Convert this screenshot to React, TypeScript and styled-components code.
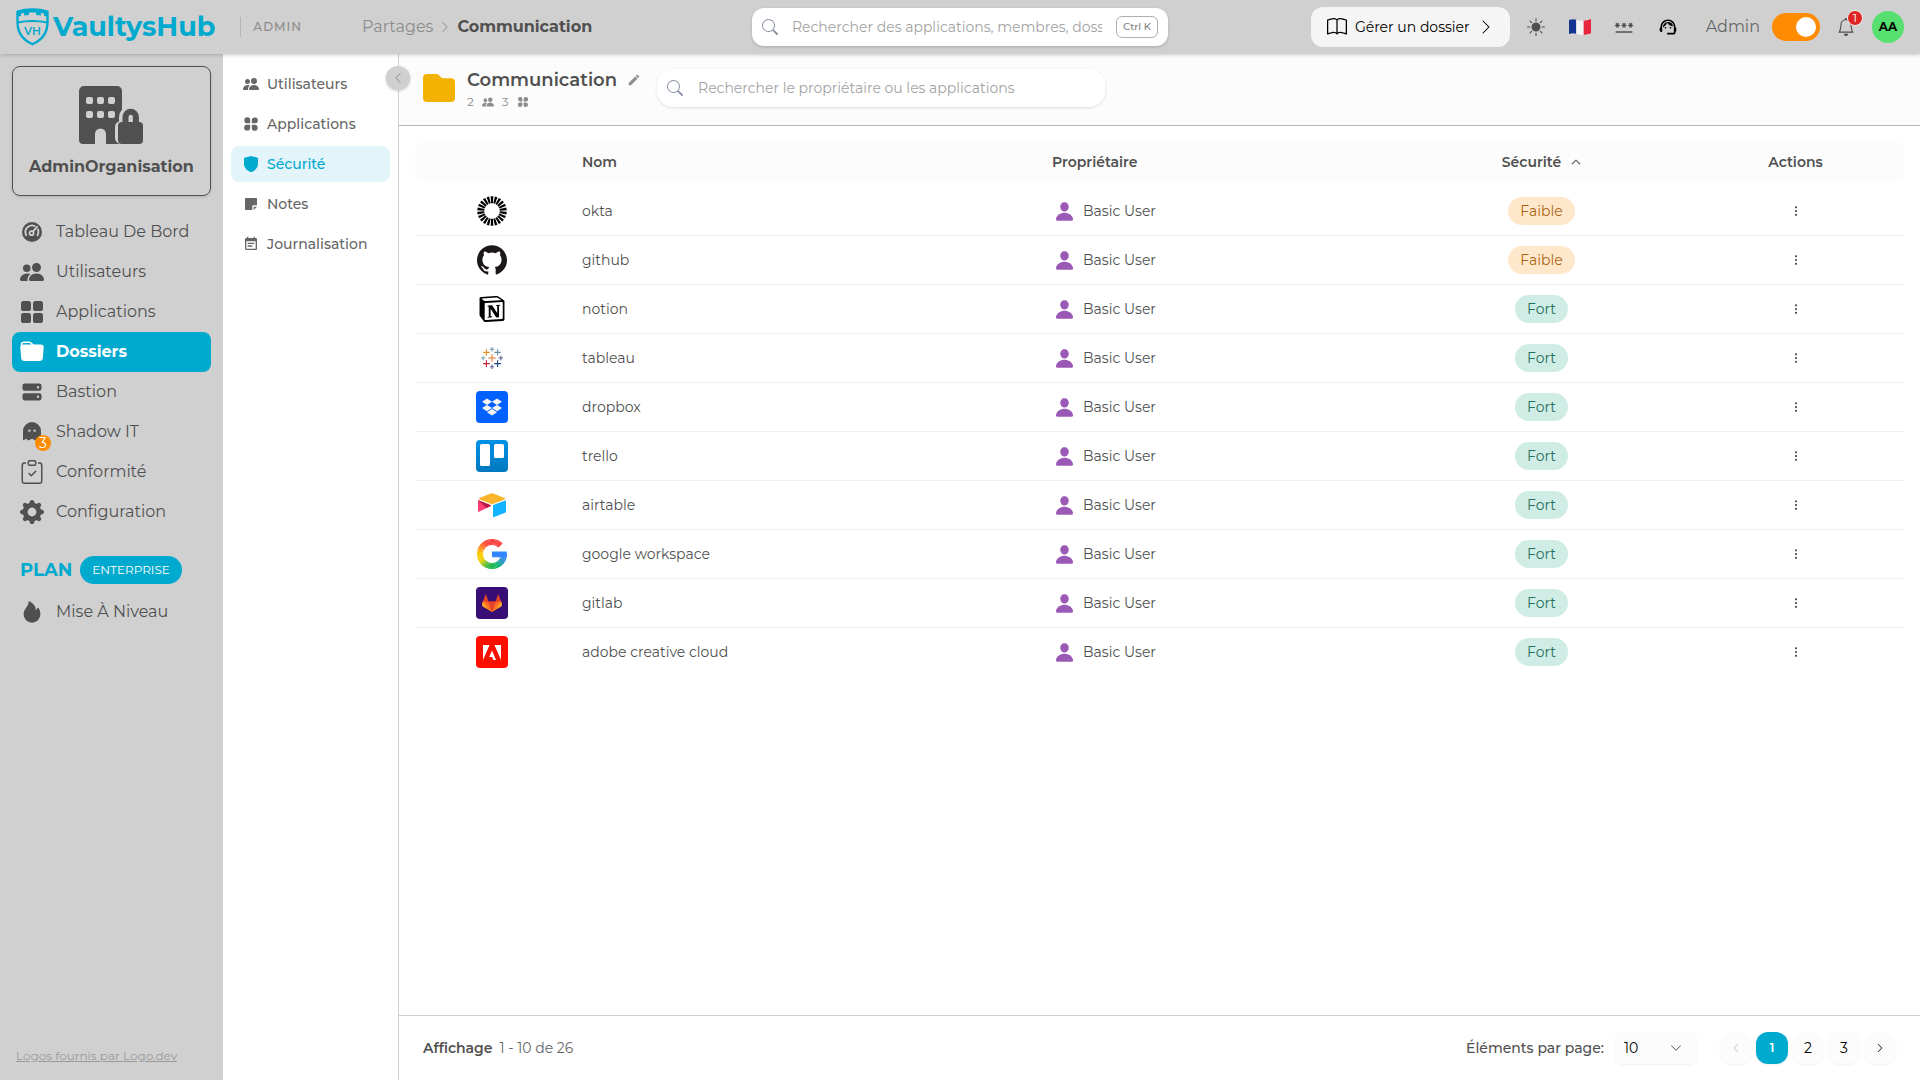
import React, { useState } from 'react';
import styled, { createGlobalStyle, css } from 'styled-components';
import {
  BsBell,
  BsBook,
  BsChevronDown,
  BsChevronLeft,
  BsChevronRight,
  BsChevronUp,
  BsClipboardCheck,
  BsFillSunFill,
  BsFolderFill,
  BsGearFill,
  BsPeopleFill,
  BsSearch,
  BsThreeDotsVertical,
} from 'react-icons/bs';
import { HiServer } from 'react-icons/hi';
import { IoPerson } from 'react-icons/io5';
import { MdEventNote, MdModeEdit, MdPassword, MdSupportAgent } from 'react-icons/md';
import { RiStickyNoteFill } from 'react-icons/ri';
import { SiDropbox, SiGithub, SiNotion } from 'react-icons/si';

const color = {
  chrome: '#d0d0d0',
  brand: '#00a9ce',
  text: '#505050',
  muted: '#666666',
  faint: '#8c8c8c',
  surface: '#fcfcfc',
  orange: '#ff8c00',
};

const GlobalStyle = createGlobalStyle`
  *, *::before, *::after { box-sizing: border-box; }
  body {
    margin: 0;
    background: #fff;
    color: ${color.text};
    font-family: Montserrat, "Liberation Sans", sans-serif;
    font-size: 14px;
    line-height: 20px;
  }
  button, input, select { font: inherit; color: inherit; }
  button { border: 0; padding: 0; background: none; cursor: pointer; }
  svg { display: block; flex: none; }
`;

/* ---------- layout ---------- */

const Page = styled.div`
  display: flex;
  flex-direction: column;
  min-height: 100vh;
`;

const Header = styled.header`
  position: relative;
  z-index: 2;
  display: grid;
  grid-template-columns: 1fr minmax(240px, 416px) 1fr;
  align-items: center;
  height: 54px;
  padding: 0 16px;
  background: ${color.chrome};
  box-shadow: 0 1px 4px rgba(0, 0, 0, 0.2);
`;

const Body = styled.div`
  display: flex;
  flex: 1;
`;

const Sidebar = styled.aside`
  display: flex;
  flex-direction: column;
  flex: none;
  width: 223px;
  padding: 12px;
  background: ${color.chrome};
`;

const SubNav = styled.nav`
  position: relative;
  display: flex;
  flex-direction: column;
  gap: 4px;
  flex: none;
  width: 176px;
  padding: 12px 8px;
  border-right: 1px solid ${color.chrome};
`;

const Main = styled.main`
  display: flex;
  flex-direction: column;
  flex: 1;
  min-width: 0;
`;

/* ---------- header ---------- */

const HeaderStart = styled.div`
  display: flex;
  align-items: center;
`;

const Brand = styled.a`
  display: flex;
  align-items: center;
  gap: 4px;
  color: ${color.brand};
  font-size: 27px;
  font-weight: 700;
  line-height: 36px;
  text-decoration: none;
`;

const Space = styled.span`
  margin-left: 25px;
  padding-left: 12px;
  border-left: 1px solid #b4b4b4;
  color: ${color.faint};
  font-size: 12px;
  font-weight: 500;
  letter-spacing: 1px;
`;

const Breadcrumb = styled.nav`
  display: flex;
  align-items: center;
  gap: 6px;
  margin-left: 60px;
  color: ${color.faint};
  font-size: 16px;
`;

const CrumbLink = styled.a`
  color: inherit;
  text-decoration: none;
`;

const Crumb = styled.span`
  color: ${color.text};
  font-weight: 700;
`;

const SearchBox = styled.label<{ $wide?: boolean }>`
  display: flex;
  align-items: center;
  gap: ${(p) => (p.$wide ? '15px' : '14px')};
  width: ${(p) => (p.$wide ? '448px' : '100%')};
  height: 38px;
  padding: 0 10px;
  border-radius: ${(p) => (p.$wide ? '16px' : '12px')};
  background: #fff;
  box-shadow: 0 1px 3px rgba(0, 0, 0, ${(p) => (p.$wide ? 0.12 : 0.2)});
  color: #8d96a8;
`;

const SearchInput = styled.input`
  flex: 1;
  min-width: 0;
  padding: 0;
  border: 0;
  outline: 0;
  background: none;
  color: ${color.text};
  font-size: 14px;
  &::placeholder { color: #a3a3a3; opacity: 1; }
`;

const Kbd = styled.kbd`
  padding: 0 6px;
  border: 1px solid #b0b0b0;
  border-radius: 6px;
  color: #808080;
  font-family: inherit;
  font-size: 10px;
  font-weight: 500;
`;

const HeaderEnd = styled.div`
  display: flex;
  align-items: center;
  justify-content: flex-end;
  gap: 8px;
`;

const GuideButton = styled.button`
  display: flex;
  align-items: center;
  gap: 8px;
  height: 40px;
  padding: 0 16px;
  border-radius: 12px;
  background: #f5f5f5;
  color: #000;
`;

const IconButton = styled.button<{ $dark?: boolean }>`
  position: relative;
  display: grid;
  place-items: center;
  width: 36px;
  height: 36px;
  color: ${(p) => (p.$dark ? '#000' : color.text)};
`;

const ToggleLabel = styled.label`
  display: flex;
  align-items: center;
  gap: 12px;
  margin-left: 12px;
  color: ${color.muted};
  font-size: 16px;
`;

const Toggle = styled.input`
  appearance: none;
  display: flex;
  align-items: center;
  width: 48px;
  height: 28px;
  margin: 0;
  padding: 4px;
  border-radius: 14px;
  background: #aaa;
  cursor: pointer;
  &::before {
    content: '';
    width: 20px;
    height: 20px;
    border-radius: 50%;
    background: #fff;
  }
  &:checked { justify-content: flex-end; background: ${color.orange}; }
`;

const BellBadge = styled.span`
  position: absolute;
  top: 1px;
  right: 1px;
  width: 16px;
  height: 16px;
  border: 1px solid #f4eeee;
  border-radius: 50%;
  background: #e02424;
  color: #fff;
  font-size: 12px;
  line-height: 14px;
  text-align: center;
`;

const Avatar = styled.button`
  width: 32px;
  height: 32px;
  border-radius: 50%;
  background: #55e070;
  color: #000;
  font-size: 12px;
  font-weight: 700;
`;

/* ---------- sidebar ---------- */

const OrgCard = styled.button`
  display: flex;
  flex-direction: column;
  align-items: center;
  gap: 13px;
  height: 130px;
  padding-top: 19px;
  border: 1px solid ${color.text};
  border-radius: 8px;
  box-shadow: 0 1px 3px rgba(0, 0, 0, 0.15);
  color: ${color.text};
  font-size: 16px;
  font-weight: 700;
`;

const SideList = styled.nav`
  display: flex;
  flex-direction: column;
  margin-top: 16px;
`;

const SideLink = styled.a<{ $active?: boolean }>`
  display: flex;
  align-items: center;
  gap: 12px;
  height: 40px;
  padding: 0 8px;
  border-radius: 8px;
  color: ${color.text};
  font-size: 16px;
  text-decoration: none;
  ${(p) =>
    p.$active &&
    css`
      background: ${color.brand};
      color: #fff;
      font-weight: 700;
    `}
`;

const SideIcon = styled.span`
  position: relative;
  display: grid;
  place-items: center;
  width: 24px;
  height: 24px;
`;

const CountBadge = styled.span`
  position: absolute;
  right: -7px;
  bottom: -7px;
  width: 16px;
  height: 16px;
  border-radius: 50%;
  background: ${color.orange};
  color: #fff;
  font-size: 14px;
  line-height: 16px;
  text-align: center;
`;

const PlanRow = styled.div`
  display: flex;
  align-items: center;
  gap: 8px;
  margin-top: 24px;
  padding: 0 8px;
  color: ${color.brand};
  font-size: 18px;
  font-weight: 700;
`;

const PlanBadge = styled.span`
  padding: 4px 12px;
  border-radius: 14px;
  background: ${color.brand};
  color: #fff;
  font-size: 12px;
  font-weight: 400;
`;

const UpgradeSlot = styled.div`
  margin-top: 8px;
`;

const Credit = styled.a`
  margin: auto 4px 2px;
  color: #999;
  font-size: 12px;
`;

/* ---------- folder navigation ---------- */

const SubLink = styled.a<{ $active?: boolean }>`
  display: flex;
  align-items: center;
  gap: 8px;
  height: 36px;
  padding: 0 12px;
  border-radius: 8px;
  background: ${(p) => (p.$active ? '#e3f5fa' : 'transparent')};
  color: ${(p) => (p.$active ? color.brand : color.muted)};
  font-weight: 500;
  text-decoration: none;
`;

const Collapse = styled.button`
  position: absolute;
  top: 12px;
  right: -12px;
  display: grid;
  place-items: center;
  width: 24px;
  height: 24px;
  border-radius: 50%;
  background: ${color.chrome};
  box-shadow: 0 1px 3px rgba(0, 0, 0, 0.2);
  color: ${color.faint};
`;

/* ---------- folder header ---------- */

const FolderBar = styled.div`
  display: flex;
  align-items: center;
  gap: 16px;
  height: 72px;
  padding: 0 24px 3px;
  border-bottom: 1px solid #b5b5b5;
  background: ${color.surface};
`;

const FolderInfo = styled.div`
  display: flex;
  align-items: center;
  gap: 12px;
`;

const Heading = styled.div`
  padding-top: 3px;
`;

const TitleRow = styled.div`
  display: flex;
  align-items: center;
  gap: 10px;
`;

const Title = styled.h1`
  margin: 0;
  font-size: 18px;
  font-weight: 600;
  line-height: 24px;
`;

const EditButton = styled.button`
  color: ${color.faint};
`;

const Counts = styled.div`
  display: flex;
  align-items: center;
  gap: 8px;
  color: ${color.faint};
  font-size: 12px;
`;

/* ---------- table ---------- */

const TableArea = styled.section`
  flex: 1;
  padding: 16px;
`;

const Table = styled.table`
  width: 100%;
  table-layout: fixed;
  border-spacing: 0;
  tbody::before {
    content: '';
    display: block;
    height: 5px;
  }
`;

const Col = styled.col<{ $w: number }>`
  width: ${(p) => p.$w}px;
`;

const Th = styled.th<{ $center?: boolean }>`
  height: 40px;
  padding: 0 13px;
  background: ${color.surface};
  font-weight: 600;
  text-align: ${(p) => (p.$center ? 'center' : 'left')};
  &:first-child { border-radius: 8px 0 0 8px; }
  &:last-child { border-radius: 0 8px 8px 0; }
`;

const SortButton = styled.button`
  display: inline-flex;
  align-items: center;
  gap: 10px;
`;

const Row = styled.tr`
  &:last-child > td { border-color: transparent; }
`;

const Td = styled.td<{ $center?: boolean }>`
  height: 49px;
  padding: 0 13px;
  border-bottom: 1px solid #f0f0f0;
  text-align: ${(p) => (p.$center ? 'center' : 'left')};
`;

const LogoSlot = styled.div`
  display: grid;
  place-items: center;
  height: 32px;
`;

const LogoTile = styled.span<{ $bg: string }>`
  display: grid;
  place-items: center;
  width: 32px;
  height: 32px;
  border-radius: 4px;
  background: ${(p) => p.$bg};
  color: #f7f5f2;
`;

const Owner = styled.div`
  display: flex;
  align-items: center;
  gap: 8px;
  padding-left: 2px;
  svg { color: #9b59b6; }
`;

const Level = styled.span<{ $weak?: boolean }>`
  display: inline-block;
  padding: 4px 12px;
  border-radius: 14px;
  background: ${(p) => (p.$weak ? '#ffe7cb' : '#cfece5')};
  color: ${(p) => (p.$weak ? '#ad6514' : '#28705f')};
`;

const RowMenu = styled.button`
  display: grid;
  place-items: center;
  width: 24px;
  height: 24px;
  margin: 0 auto;
`;

/* ---------- pagination ---------- */

const Footer = styled.footer`
  display: flex;
  align-items: center;
  justify-content: space-between;
  height: 65px;
  padding: 0 24px;
  border-top: 1px solid ${color.chrome};
`;

const Range = styled.div`
  display: flex;
  gap: 7px;
  color: ${color.muted};
`;

const Strong = styled.strong`
  color: ${color.text};
  font-weight: 600;
`;

const FooterEnd = styled.div`
  display: flex;
  align-items: center;
  gap: 23px;
`;

const PageSize = styled.label`
  display: flex;
  align-items: center;
  gap: 11px;
  font-weight: 500;
`;

const SelectWrap = styled.span`
  display: grid;
  align-items: center;
  > * { grid-area: 1 / 1; }
  > svg { justify-self: end; margin-right: 15px; pointer-events: none; }
`;

const Select = styled.select`
  appearance: none;
  width: 82px;
  height: 32px;
  padding: 0 9px;
  border: 0;
  border-radius: 8px;
  background: ${color.surface};
  box-shadow: 0 1px 2px rgba(0, 0, 0, 0.06);
  color: #000;
  font-weight: 400;
`;

const Pager = styled.nav`
  display: flex;
  gap: 4px;
`;

const PageButton = styled.button<{ $active?: boolean }>`
  display: grid;
  place-items: center;
  width: 32px;
  height: 32px;
  border-radius: 12px;
  background: ${(p) => (p.$active ? color.brand : color.surface)};
  box-shadow: 0 1px 2px rgba(0, 0, 0, 0.06);
  color: ${(p) => (p.$active ? '#fff' : '#000')};
  font-size: ${(p) => (p.$active ? '12px' : '14px')};
  font-weight: ${(p) => (p.$active ? 600 : 400)};
  &:disabled { color: #bbb; }
`;

/* ---------- drawings ---------- */

const SvgText = styled.text`
  font-family: Montserrat, "Liberation Sans", sans-serif;
  font-size: 11px;
  font-weight: 600;
`;

const BrandShield = () => (
  <svg width="33" height="38" viewBox="0 0 33 38" fill="none" aria-hidden="true">
    <path
      d="M1.5 3.6C10 .6 23 .6 31.5 3.6V14C31.5 25 25 32.5 16.5 36.2 8 32.5 1.5 25 1.5 14Z"
      stroke="currentColor"
      strokeWidth="2.4"
      strokeLinejoin="round"
    />
    <path
      d="M1.5 3.6C10 .6 23 .6 31.5 3.6V8.5L28 8V5.5L25 5V7.5L20 7V4.5H13V7L8 7.5V5L5 5.5V8L1.5 8.5Z"
      fill="currentColor"
    />
    <path d="M2 14.5C10 12.5 23 12.5 31 14.5" stroke="currentColor" strokeWidth="2" />
    <SvgText x="16.5" y="27" textAnchor="middle" fill="currentColor">VH</SvgText>
  </svg>
);

const BuildingLock = () => (
  <svg width="65" height="58" viewBox="0 0 65 58" aria-hidden="true">
    <path
      fill="currentColor"
      d="M5 0H38a5 5 0 0 1 5 5V58H27V48a5.5 5.5 0 0 0-11 0V58H4a4 4 0 0 1-4-4V5a5 5 0 0 1 5-5Z"
    />
    {[11, 25].map((y) =>
      [7, 18, 29].map((x) => (
        <rect key={`${x}-${y}`} x={x} y={y} width="7" height="7" rx="2" fill={color.chrome} />
      )),
    )}
    <path
      d="M42 58a6 6 0 0 1-6-6V41a6 6 0 0 1 4-5.500V32a11.500 11.500 0 0 1 13-12V58Z"
      fill={color.chrome}
    />
    <path d="M46.500 38V31a5.200 5.200 0 0 1 10.400 0V38" fill="none" stroke="currentColor" strokeWidth="6" />
    <rect x="39" y="36" width="25" height="22" rx="4" fill="currentColor" />
  </svg>
);

const Gauge = () => (
  <svg width="20" height="20" viewBox="0 0 20 20" fill="none" aria-hidden="true">
    <circle cx="10" cy="10" r="10" fill="currentColor" />
    <path
      d="M4.200 13.200A6.600 6.600 0 0 1 12.600 4M16 7.400A6.600 6.600 0 0 1 15.600 13.200"
      stroke={color.chrome}
      strokeWidth="1.900"
      strokeLinecap="round"
    />
    <circle cx="9.600" cy="11.200" r="2" stroke={color.chrome} strokeWidth="1.700" />
    <path d="M11.300 9.100 15 4.800" stroke={color.chrome} strokeWidth="1.900" strokeLinecap="round" />
  </svg>
);

const Tiles = () => (
  <svg width="22" height="22" viewBox="0 0 22 22" fill="currentColor" aria-hidden="true">
    {[0, 12].map((y) =>
      [0, 12].map((x) => <rect key={`${x}-${y}`} x={x} y={y} width="10" height="10" rx="2.600" />),
    )}
  </svg>
);

const Clover = ({ size }: { size: number }) => (
  <svg width={size} height={size} viewBox="0 0 16 16" fill="currentColor" aria-hidden="true">
    {[0, 90, 180, 270].map((a) => (
      <path
        key={a}
        transform={`rotate(${a} 8 8)`}
        d="M4.300 1.200h.4A2.500 2.500 0 0 1 7.200 3.700v2.800a.7.7 0 0 1-.7.7H4.200a2.800 2.800 0 0 1-2.800-2.800v-.4a2.800 2.800 0 0 1 2.900-2.800Z"
      />
    ))}
  </svg>
);

const Shield = () => (
  <svg width="16" height="16" viewBox="0 0 16 16" fill="currentColor" aria-hidden="true">
    <path d="M7.400.2a2 2 0 0 1 1.200 0l5.400 1.400a1.200 1.200 0 0 1 1 1.200V7.500c0 4-2.600 7-6.400 8.400a2 2 0 0 1-1.200 0C3.600 14.500 1 11.500 1 7.500V2.800a1.200 1.200 0 0 1 1-1.200Z" />
  </svg>
);

const Ghost = () => (
  <svg width="18" height="20" viewBox="0 0 18 20" fill="currentColor" aria-hidden="true">
    <path d="M9 0a9 9 0 0 1 9 9v9l-2.800-1.400L12.500 18.500 9 16.800 5.500 18.500 3 16.800.6 18.300A.5.5 0 0 1 0 18V9a9 9 0 0 1 9-9Z" />
    <circle cx="6.400" cy="8.600" r="1.200" fill={color.chrome} />
    <circle cx="11.600" cy="8.600" r="1.200" fill={color.chrome} />
  </svg>
);

const Flame = () => (
  <svg width="18" height="22" viewBox="0 0 18 22" fill="currentColor" aria-hidden="true">
    <path d="M6.600.3c-.5-.4-1 0-1 .5C5.700 5.200.6 7.900.6 13.300a8.400 8.400 0 0 0 16.800 0c0-2.500-.7-4.700-1.900-6.300-.3-.5-.9-.4-1.100.1-.3 1-.9 1.600-1.700 1.800C12.900 5.500 10.600 2.600 6.600.3Z" />
  </svg>
);

const FolderIcon = () => (
  <svg width="32" height="28" viewBox="0 0 32 28" aria-hidden="true">
    <path
      fill="#f3b200"
      d="M4 0h9.500a3 3 0 0 1 2.200 1l2.600 2.600a2 2 0 0 0 1.500.6H28a4 4 0 0 1 4 4V24a4 4 0 0 1-4 4H4a4 4 0 0 1-4-4V4a4 4 0 0 1 4-4Z"
    />
  </svg>
);

const FrenchFlag = () => (
  <svg width="22" height="16" viewBox="0 0 22 16" aria-hidden="true">
    <path d="M0 1C3-.2 5 0 7.300.8V14.800C5 14 3 13.800 0 15Z" fill="#12338f" />
    <path d="M7.300.8c2.400.8 5 1.400 7.400 1V15.800c-2.400.4-5-.2-7.400-1Z" fill="#f4f4f4" />
    <path d="M14.700 1.800C17 1.600 19 .9 22 0V14.200c-3 1-5 1.400-7.300 1.600Z" fill="#e6273c" />
  </svg>
);

const OktaLogo = () => (
  <svg width="30" height="30" viewBox="0 0 30 30" aria-hidden="true">
    {Array.from({ length: 22 }, (_, i) => (
      <path
        key={i}
        d="M13.700 .3H16.300L15.900 7.300H14.100Z"
        fill="#000"
        transform={`rotate(${(i * 360) / 22} 15 15)`}
      />
    ))}
  </svg>
);

const tableauMarks: [number, number, number, string][] = [
  [11, 11, 3.8, '#e8762d'],
  [5.4, 5.4, 3.4, '#eb912c'],
  [16.6, 5.4, 3.2, '#5b8fa8'],
  [5.4, 16.6, 3.4, '#c72037'],
  [16.6, 16.6, 3.4, '#1f457e'],
  [11, 2.2, 2.2, '#7099a6'],
  [11, 19.8, 2.2, '#5b6591'],
  [2.2, 11, 2.2, '#7bafb8'],
  [19.8, 11, 2.2, '#5c6692'],
];

const TableauLogo = () => (
  <svg width="22" height="22" viewBox="0 0 22 22" aria-hidden="true">
    {tableauMarks.map(([x, y, r, c], i) => (
      <path key={i} d={`M${x - r} ${y}h${r * 2}M${x} ${y - r}v${r * 2}`} stroke={c} strokeWidth="1.100" />
    ))}
  </svg>
);

const TrelloLogo = () => (
  <svg width="32" height="32" viewBox="0 0 32 32" aria-hidden="true">
    <defs>
      <linearGradient id="trello" x1="0" y1="0" x2="0" y2="1">
        <stop offset="0" stopColor="#0091e6" />
        <stop offset="1" stopColor="#0079bf" />
      </linearGradient>
    </defs>
    <rect width="32" height="32" rx="4" fill="url(#trello)" />
    <rect x="4" y="4" width="10" height="22" rx="1.500" fill="#fff" />
    <rect x="18" y="4" width="10" height="14" rx="1.500" fill="#fff" />
  </svg>
);

const AirtableLogo = () => (
  <svg width="28" height="24" viewBox="0 0 28 24" aria-hidden="true">
    <path d="M12.700.4 1.500 5c-.6.3-.6 1.100 0 1.400l11.300 4.400c.9.400 1.900.4 2.800 0l11-4.400c.6-.3.6-1.100 0-1.400L15.400.4a3.600 3.600 0 0 0-2.700 0Z" fill="#fcb42b" />
    <path d="M15 12.700V23.500c0 .5.5.8 1 .6l11.600-4.500a.7.7 0 0 0 .4-.6V8.200c0-.5-.5-.8-1-.6l-11.600 4.500a.7.7 0 0 0-.4.6Z" fill="#12b4ff" />
    <path d="M12.400 13.200 1 18.800c-.4.2-1 0-1-.6V8c0-.5.6-.8 1-.6l11.300 4.600c.5.200.6.9.1 1.200Z" fill="#ff3e75" />
    <path d="M8.500 15.100 0.300 7.600C.5 7.400.8 7.300 1 7.400l11.300 4.600c.5.200.6.9.1 1.200Z" fill="#b5194a" />
  </svg>
);

/* Colour of the ring of the "G" at an angle, in degrees, counted anticlockwise from its open end. */
const googleStops: [number, number[]][] = [
  [0, [255, 66, 69]],
  [70, [255, 66, 58]],
  [105, [255, 140, 20]],
  [130, [255, 206, 0]],
  [165, [235, 210, 10]],
  [200, [60, 185, 60]],
  [245, [10, 185, 100]],
  [285, [40, 140, 220]],
  [315, [49, 134, 255]],
];

const googleColor = (a: number) => {
  const i = Math.max(1, googleStops.findIndex(([s]) => s >= a));
  const [a0, c0] = googleStops[i - 1];
  const [a1, c1] = googleStops[i];
  const t = (a - a0) / (a1 - a0);
  return `rgb(${c0.map((v, k) => Math.round(v + (c1[k] - v) * t)).join(',')})`;
};

const ringPoint = (a: number) => {
  const rad = ((-45 - a) * Math.PI) / 180;
  return `${15 + 12 * Math.cos(rad)} ${15 + 12 * Math.sin(rad)}`;
};

const GoogleLogo = () => (
  <svg width="30" height="30" viewBox="0 0 30 30" fill="none" aria-hidden="true">
    {Array.from({ length: 63 }, (_, i) => (
      <path
        key={i}
        d={`M${ringPoint(i * 5)}A12 12 0 0 0 ${ringPoint(Math.min(315, i * 5 + 6))}`}
        stroke={googleColor(i * 5)}
        strokeWidth="6"
      />
    ))}
    <path d="M15 12.400H29.800V15.500L29 18.200H15Z" fill="#3186ff" />
  </svg>
);

const GitlabLogo = () => (
  <svg width="20" height="18" viewBox="0 0 20 18" aria-hidden="true">
    <path d="M3.800 0 6.600 7.500H13.400L16.200 0 19.300 8 10 18 .7 8Z" fill="#e24329" />
    <path d="M.7 7.500 0 10.500a2 2 0 0 0 .8 2L10 18 6 9.500Z" fill="#fca326" />
    <path d="M19.300 7.500 20 10.500a2 2 0 0 1-.8 2L10 18 14 9.500Z" fill="#fca326" />
    <path d="M1.500 7.600 6.500 8.500 10 18 5.600 14.500Z" fill="#fc6d26" />
    <path d="M18.500 7.600 13.500 8.500 10 18 14.400 14.500Z" fill="#fc6d26" />
    <path d="M6.600 7.500H13.400L10 18Z" fill="#e24329" />
  </svg>
);

const AdobeLogo = () => (
  <svg width="18" height="15" viewBox="0 0 18 15" fill="#fff" aria-hidden="true">
    <path d="M0 0H6.500L0 15ZM11.500 0H18V15ZM9 5.500 13 15H10.300L9.100 12H6.200Z" />
  </svg>
);

/* ---------- data ---------- */

const sideItems: { label: string; icon: React.ReactNode; active?: boolean; count?: number }[] = [
  { label: 'Tableau De Bord', icon: <Gauge /> },
  { label: 'Utilisateurs', icon: <BsPeopleFill size={24} /> },
  { label: 'Applications', icon: <Tiles /> },
  { label: 'Dossiers', icon: <BsFolderFill size={24} />, active: true },
  { label: 'Bastion', icon: <HiServer size={24} /> },
  { label: 'Shadow IT', icon: <Ghost />, count: 3 },
  { label: 'Conformité', icon: <BsClipboardCheck size={24} /> },
  { label: 'Configuration', icon: <BsGearFill size={24} /> },
];

const subItems: { label: string; icon: React.ReactNode; active?: boolean }[] = [
  { label: 'Utilisateurs', icon: <BsPeopleFill size={16} /> },
  { label: 'Applications', icon: <Clover size={16} /> },
  { label: 'Sécurité', icon: <Shield />, active: true },
  { label: 'Notes', icon: <RiStickyNoteFill size={16} /> },
  { label: 'Journalisation', icon: <MdEventNote size={16} /> },
];

const apps: { name: string; logo: React.ReactNode; weak?: boolean }[] = [
  { name: 'okta', logo: <OktaLogo />, weak: true },
  { name: 'github', logo: <SiGithub size={30} color="#1b1817" />, weak: true },
  { name: 'notion', logo: <SiNotion size={26} color="#000" /> },
  { name: 'tableau', logo: <TableauLogo /> },
  { name: 'dropbox', logo: <LogoTile $bg="#0061ff"><SiDropbox size={20} /></LogoTile> },
  { name: 'trello', logo: <TrelloLogo /> },
  { name: 'airtable', logo: <AirtableLogo /> },
  { name: 'google workspace', logo: <GoogleLogo /> },
  { name: 'gitlab', logo: <LogoTile $bg="#380d75"><GitlabLogo /></LogoTile> },
  { name: 'adobe creative cloud', logo: <LogoTile $bg="#fa0f00"><AdobeLogo /></LogoTile> },
];

/* ---------- page ---------- */

export default function App() {
  const [admin, setAdmin] = useState(true);
  return (
    <Page>
      <GlobalStyle />
      <Header>
        <HeaderStart>
          <Brand href="#"><BrandShield />VaultysHub</Brand>
          <Space>ADMIN</Space>
          <Breadcrumb aria-label="Fil d'Ariane">
            <CrumbLink href="#">Partages</CrumbLink>
            <BsChevronRight size={12} />
            <Crumb>Communication</Crumb>
          </Breadcrumb>
        </HeaderStart>
        <SearchBox>
          <BsSearch size={16} />
          <SearchInput placeholder="Rechercher des applications, membres, dossiers" />
          <Kbd>Ctrl K</Kbd>
        </SearchBox>
        <HeaderEnd>
          <GuideButton><BsBook size={20} />Gérer un dossier<BsChevronRight size={16} /></GuideButton>
          <IconButton aria-label="Thème"><BsFillSunFill size={18} /></IconButton>
          <IconButton aria-label="Langue"><FrenchFlag /></IconButton>
          <IconButton aria-label="Mot de passe"><MdPassword size={20} /></IconButton>
          <IconButton $dark aria-label="Assistance"><MdSupportAgent size={20} /></IconButton>
          <ToggleLabel>
            Admin
            <Toggle type="checkbox" checked={admin} onChange={(e) => setAdmin(e.target.checked)} />
          </ToggleLabel>
          <IconButton aria-label="Notifications"><BsBell size={18} /><BellBadge>1</BellBadge></IconButton>
          <Avatar>AA</Avatar>
        </HeaderEnd>
      </Header>
      <Body>
        <Sidebar>
          <OrgCard><BuildingLock />AdminOrganisation</OrgCard>
          <SideList>
            {sideItems.map((s) => (
              <SideLink key={s.label} href="#" $active={s.active}>
                <SideIcon>{s.icon}{s.count && <CountBadge>{s.count}</CountBadge>}</SideIcon>
                {s.label}
              </SideLink>
            ))}
          </SideList>
          <PlanRow>PLAN<PlanBadge>ENTERPRISE</PlanBadge></PlanRow>
          <UpgradeSlot>
            <SideLink href="#"><SideIcon><Flame /></SideIcon>Mise À Niveau</SideLink>
          </UpgradeSlot>
          <Credit href="#">Logos fournis par Logo.dev</Credit>
        </Sidebar>
        <SubNav>
          {subItems.map((s) => (
            <SubLink key={s.label} href="#" $active={s.active}>{s.icon}{s.label}</SubLink>
          ))}
          <Collapse aria-label="Réduire"><BsChevronLeft size={12} /></Collapse>
        </SubNav>
        <Main>
          <FolderBar>
            <FolderInfo>
              <FolderIcon />
              <Heading>
                <TitleRow>
                  <Title>Communication</Title>
                  <EditButton aria-label="Modifier"><MdModeEdit size={14} /></EditButton>
                </TitleRow>
                <Counts>2 <BsPeopleFill size={12} /> 3 <Clover size={12} /></Counts>
              </Heading>
            </FolderInfo>
            <SearchBox $wide>
              <BsSearch size={16} />
              <SearchInput placeholder="Rechercher le propriétaire ou les applications" />
            </SearchBox>
          </FolderBar>
          <TableArea>
            <Table>
              <colgroup>
                <Col $w={154} /><Col $w={470} /><Col $w={357} /><Col $w={291} /><Col $w={217} />
              </colgroup>
              <thead>
                <tr>
                  <Th aria-label="Logo" />
                  <Th>Nom</Th>
                  <Th>Propriétaire</Th>
                  <Th $center><SortButton>Sécurité<BsChevronUp size={10} strokeWidth={1} /></SortButton></Th>
                  <Th $center>Actions</Th>
                </tr>
              </thead>
              <tbody>
                {apps.map((a) => (
                  <Row key={a.name}>
                    <Td><LogoSlot>{a.logo}</LogoSlot></Td>
                    <Td>{a.name}</Td>
                    <Td><Owner><IoPerson size={21} />Basic User</Owner></Td>
                    <Td $center><Level $weak={a.weak}>{a.weak ? 'Faible' : 'Fort'}</Level></Td>
                    <Td><RowMenu aria-label="Actions"><BsThreeDotsVertical size={12} /></RowMenu></Td>
                  </Row>
                ))}
              </tbody>
            </Table>
          </TableArea>
          <Footer>
            <Range><Strong>Affichage</Strong>1 - 10 de 26</Range>
            <FooterEnd>
              <PageSize>
                Éléments par page:
                <SelectWrap>
                  <Select defaultValue="10"><option>10</option><option>25</option><option>50</option></Select>
                  <BsChevronDown size={12} />
                </SelectWrap>
              </PageSize>
              <Pager aria-label="Pagination">
                <PageButton disabled aria-label="Précédent"><BsChevronLeft size={10} /></PageButton>
                <PageButton $active>1</PageButton>
                <PageButton>2</PageButton>
                <PageButton>3</PageButton>
                <PageButton aria-label="Suivant"><BsChevronRight size={10} /></PageButton>
              </Pager>
            </FooterEnd>
          </Footer>
        </Main>
      </Body>
    </Page>
  );
}
